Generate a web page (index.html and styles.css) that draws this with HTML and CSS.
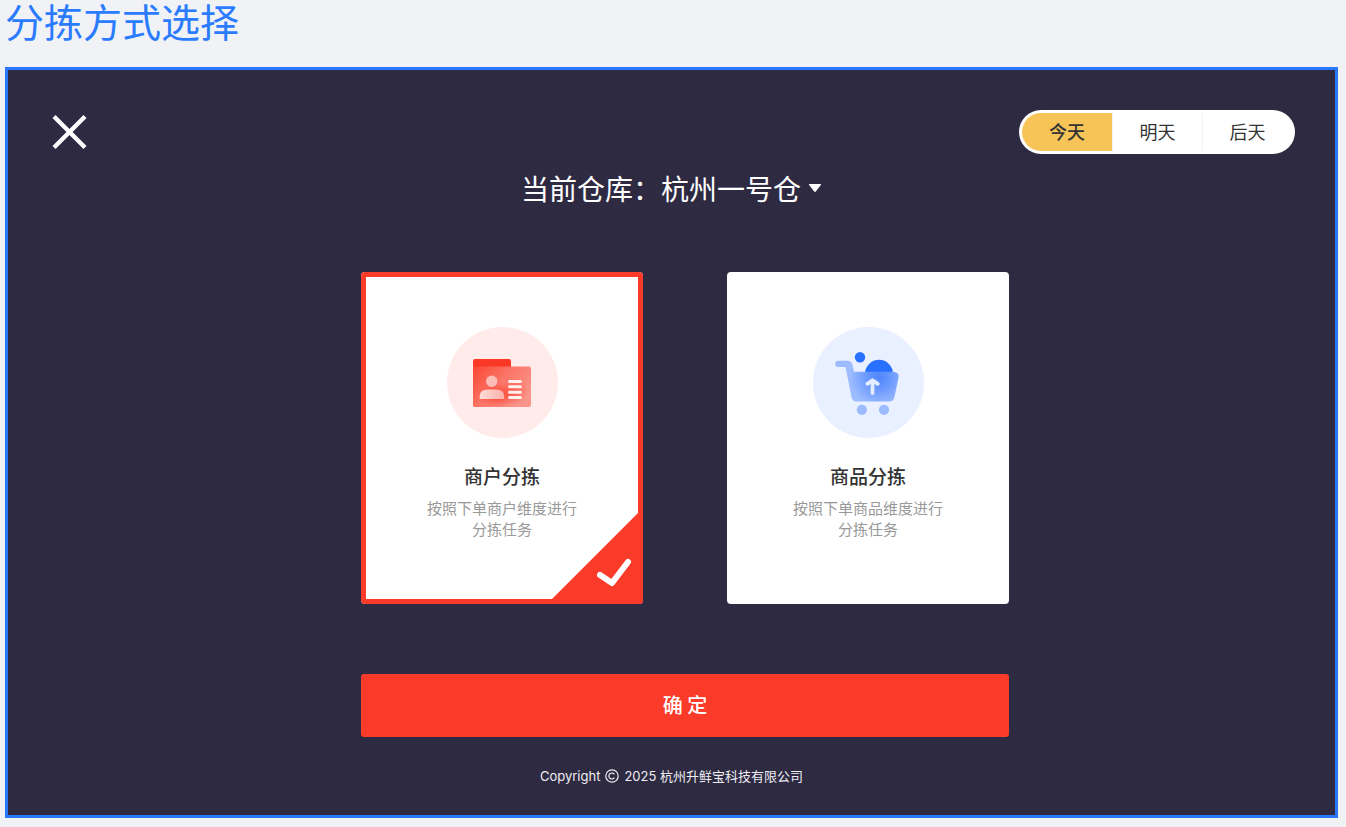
FILE: index.html
```html
<!DOCTYPE html>
<html lang="zh-CN">

<head>
    <title>分拣方式选择</title>
    <meta charset="utf-8">
    <meta name="viewport" content="width=device-width, initial-scale=1.0">
    <link rel="stylesheet" href="styles.css">
</head>

<body>
    <h1 class="page-title">分拣方式选择</h1>

    <main class="panel">
        <header class="topbar">
            <button type="button" class="close" aria-label="关闭">
                <svg viewBox="0 0 48 44" width="48" height="44" fill="none" stroke="#fff" stroke-width="4.400">
                    <path d="M8 6.500L39 37.500M39 6.500L8 37.500" />
                </svg>
            </button>
            <nav class="days">
                <button type="button" class="day active">今天</button>
                <button type="button" class="day">明天</button>
                <button type="button" class="day">后天</button>
            </nav>
        </header>

        <div class="warehouse">
            <label for="warehouse">当前仓库：</label>
            <select id="warehouse">
                <option>杭州一号仓</option>
            </select>
            <svg class="arrow" viewBox="0 0 14 10" width="14" height="10">
                <path d="M1.500 1h11q1 0 .4 .9l-5.100 6.600q-.8 .9-1.600 0L1.100 1.900Q.5 1 1.500 1z" fill="#fff" />
            </svg>
        </div>

        <form class="sorting">
            <div class="cards">
                <label class="card">
                    <input type="radio" name="mode" value="merchant" checked>
                    <svg class="icon" viewBox="0 0 111 111">
                        <defs>
                            <linearGradient id="folder" x1="0" y1="0" x2="1" y2=".6">
                                <stop offset="0" stop-color="#fa4632" />
                                <stop offset=".5" stop-color="#fb7466" />
                                <stop offset="1" stop-color="#fb958b" />
                            </linearGradient>
                            <radialGradient id="glow">
                                <stop offset="0" stop-color="#fa3c28" stop-opacity=".9" />
                                <stop offset="1" stop-color="#fa3c28" stop-opacity="0" />
                            </radialGradient>
                            <linearGradient id="person" x1="0" y1="0" x2="1" y2="0">
                                <stop offset="0" stop-color="#ffddd9" />
                                <stop offset="1" stop-color="#fdb0a8" />
                            </linearGradient>
                        </defs>
                        <circle cx="55.500" cy="55.500" r="55.500" fill="#ffebe9" />
                        <path d="M26 42V34q0-2 2-2h34q2 0 2 2v8z" fill="#fa3826" />
                        <path d="M26 39.500h56q2 0 2 2V78q0 2-2 2H28q-2 0-2-2z" fill="url(#folder)" />
                        <ellipse cx="51" cy="68" rx="20" ry="12" fill="url(#glow)" />
                        <ellipse cx="68" cy="64" rx="13" ry="14" fill="url(#glow)" opacity=".6" />
                        <circle cx="44.700" cy="54.300" r="5.700" fill="#fdbdb6" />
                        <path d="M32.700 72v-3q0-6.500 8-6.500h8.500q8 0 8 6.500v3z" fill="url(#person)" />
                        <path d="M62.500 54.400h11M62.500 59.800h11M62.500 65.200h11M62.500 70.500h11" stroke="#fff0ee" stroke-width="3" stroke-linecap="round" />
                    </svg>
                    <strong class="name">商户分拣</strong>
                    <span class="desc">按照下单商户维度进行<br>分拣任务</span>
                    <svg class="corner" viewBox="0 0 96 96">
                        <path d="M96 0V96H0z" fill="#fb3b29" />
                        <path d="M53 67L65 75L81 54" fill="none" stroke="#fff" stroke-width="6" stroke-linecap="round" stroke-linejoin="round" />
                    </svg>
                </label>

                <label class="card">
                    <input type="radio" name="mode" value="product">
                    <svg class="icon" viewBox="0 0 111 111">
                        <defs>
                            <radialGradient id="cart" gradientUnits="userSpaceOnUse" cx="66" cy="50" r="29">
                                <stop offset="0" stop-color="#4f86fc" />
                                <stop offset=".45" stop-color="#6c9afd" />
                                <stop offset="1" stop-color="#9dbcff" />
                            </radialGradient>
                        </defs>
                        <circle cx="55.500" cy="55.500" r="55.500" fill="#e9f0ff" />
                        <circle cx="47" cy="30.300" r="5.200" fill="#2871fe" />
                        <circle cx="66" cy="46.800" r="14" fill="#2871fe" />
                        <path d="M25.500 33.700h9q3.800 0 4.800 3.600L41 44.700H79.500q7 0 6 6L81.500 70q-1 4.500-5.500 4.500H44Q39.500 74.500 38.500 70L32.500 40h-7q-3.300 0-3.300-3.100T25.500 33.700z" fill="url(#cart)" />
                        <path d="M54.300 56.800L59.500 53.300L64.800 56.800M59.500 54.500V66" fill="none" stroke="#e3edff" stroke-width="3.800" stroke-linecap="round" stroke-linejoin="round" />
                        <circle cx="48.900" cy="82.800" r="5.100" fill="#9dbcff" />
                        <circle cx="71" cy="82.800" r="5.100" fill="#9dbcff" />
                    </svg>
                    <strong class="name">商品分拣</strong>
                    <span class="desc">按照下单商品维度进行<br>分拣任务</span>
                    <svg class="corner" viewBox="0 0 96 96">
                        <path d="M96 0V96H0z" fill="#fb3b29" />
                        <path d="M53 67L65 75L81 54" fill="none" stroke="#fff" stroke-width="6" stroke-linecap="round" stroke-linejoin="round" />
                    </svg>
                </label>
            </div>
            <button type="button" class="confirm">确 定</button>
        </form>

        <footer class="copyright">
            <span>Copyright</span>
            <svg viewBox="0 0 14 14" width="14" height="14" fill="none" stroke="#efeef2" stroke-width="1.200">
                <circle cx="7" cy="7" r="6.200" />
                <path d="M9.400 5.400A3 3 0 1 0 9.400 8.600" />
            </svg>
            <span>2025 杭州升鲜宝科技有限公司</span>
        </footer>
    </main>
</body>

</html>
```

FILE: styles.css
```css
* {
    box-sizing: border-box;
}

body {
    margin: 0;
    padding: 0 8px 9px 5px;
    background: #f0f2f6;
    font-family: "Noto Sans CJK SC", sans-serif;
}

button,
select {
    margin: 0;
    padding: 0;
    border: 0;
    background: none;
    color: inherit;
    font: inherit;
    cursor: pointer;
}

svg {
    display: block;
    flex-shrink: 0;
}

.page-title {
    margin: 0 0 27px;
    color: #2b7bff;
    font-size: 39px;
    font-weight: 400;
    line-height: 40px;
}

.panel {
    padding: 40px;
    padding-bottom: 28px;
    border: 3px solid #2878ff;
    background: #2e2a42;
    color: #fff;
}

.topbar {
    display: flex;
    justify-content: space-between;
}

.close {
    margin-left: -2px;
}

.days {
    display: flex;
    padding: 3px;
    border-radius: 22px;
    background: #fff;
    color: #333;
}

.day {
    width: 90px;
    height: 38px;
    padding-bottom: 2px;
    font-size: 18px;
    line-height: 36px;
}

.day + .day {
    border-left: 1px solid #f2f2f2;
}

.day.active {
    border-radius: 19px 0 0 19px;
    background: #f7c557;
    font-weight: 500;
}

.warehouse {
    display: flex;
    align-items: center;
    justify-content: center;
    margin-top: 14px;
    font-size: 28px;
    line-height: 40px;
}

.warehouse select {
    appearance: none;
}

.arrow {
    margin-left: 6px;
}

/* cards and confirm button share one column */
.sorting {
    max-width: 675px;
    margin: 64px auto 0;
    padding-left: 27px;
}

.cards {
    display: grid;
    grid-template-columns: 1fr 1fr;
    gap: 84px;
}

.card {
    position: relative;
    display: flex;
    flex-direction: column;
    align-items: center;
    padding: 55px 20px 65px;
    border-radius: 4px;
    background: #fff;
    text-align: center;
    cursor: pointer;
}

.card input {
    position: absolute;
    opacity: 0;
}

.card:has(input:checked) {
    box-shadow: inset 0 0 0 5px #fb3b29;
}

.icon {
    width: 111px;
    height: 111px;
}

.name {
    margin-top: 24px;
    color: #333;
    font-size: 19px;
    font-weight: 500;
    line-height: 28px;
}

.desc {
    margin-top: 7px;
    color: #999;
    font-size: 15px;
    line-height: 21px;
}

.corner {
    display: none;
    position: absolute;
    right: 0;
    bottom: 0;
    width: 96px;
    height: 96px;
    border-radius: 0 0 4px 0;
}

.card input:checked ~ .corner {
    display: block;
}

.confirm {
    display: block;
    width: 100%;
    height: 63px;
    margin-top: 70px;
    padding-bottom: 2px;
    border-radius: 3px;
    background: #fb3b29;
    font-size: 20px;
    font-weight: 500;
}

.copyright {
    display: flex;
    align-items: center;
    justify-content: center;
    gap: 5px;
    margin-top: 28px;
    color: #efeef2;
    font-family: Inter, "Noto Sans CJK SC", sans-serif;
    font-size: 13px;
    line-height: 22px;
}
```
